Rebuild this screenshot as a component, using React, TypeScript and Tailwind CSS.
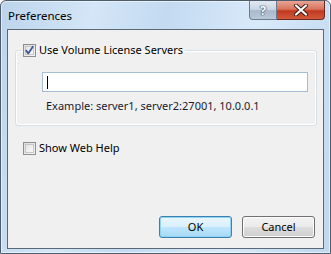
import type { ReactNode } from "react";

function CheckBox({ checked }: { checked?: boolean }) {
  return (
    <span className="relative flex h-[13px] w-[13px] shrink-0 items-center justify-center border border-[#8f8f8f] bg-[linear-gradient(135deg,#dcdcdc,#f7f7f7)]">
      <span className="h-[9px] w-[9px] border border-[#c6c6c6] bg-[linear-gradient(135deg,#e4e4e4,#fafafa)]" />
      {checked ? (
        <svg
          viewBox="0 0 11 11"
          className="absolute left-0 top-0 h-[11px] w-[11px]"
        >
          <path
            d="M2.2 5.6 L4.3 8.4 L8.8 1.8"
            fill="none"
            stroke="#3b5899"
            strokeWidth="1.8"
            strokeLinecap="round"
            strokeLinejoin="round"
          />
        </svg>
      ) : null}
    </span>
  );
}

function Button({ children, primary }: { children: ReactNode; primary?: boolean }) {
  return (
    <button
      type="button"
      className={
        primary
          ? "flex h-[22px] w-[73px] items-center justify-center rounded-[3px] border border-[#3c7fb1] bg-[linear-gradient(#eaf6fd_0%,#d9f0fc_50%,#bee6fd_51%,#a7d9f5_100%)] text-[11px] text-black shadow-[inset_0_0_0_1px_#8fd3f4]"
          : "flex h-[22px] w-[73px] items-center justify-center rounded-[3px] border border-[#707070] bg-[linear-gradient(#f2f2f2_0%,#ebebeb_50%,#dddddd_51%,#cfcfcf_100%)] text-[11px] text-black shadow-[inset_0_0_0_1px_#fcfcfc]"
      }
    >
      {children}
    </button>
  );
}

export default function App() {
  return (
    <div className="h-[254px] w-[331px] overflow-hidden bg-white font-['Noto_Sans',sans-serif]">
      <div className="flex h-[254px] w-[331px] flex-col rounded-t-[6px] border border-[#4e5d6d] bg-[linear-gradient(100deg,#bcd4ec_0%,#d4e6f7_25%,#c3daf1_45%,#d9eafa_70%,#c0d7ee_100%)] shadow-[inset_0_0_0_1px_rgba(255,255,255,0.55)]">
        <div className="flex h-[28px] items-start">
          <span className="pl-[7px] pt-[7px] text-[11.5px] leading-[16px] text-black">
            Preferences
          </span>
          <div className="ml-auto mr-[5px] flex h-[19px]">
            <div className="flex w-[28px] items-center justify-center rounded-bl-[4px] border border-t-0 border-[#6d7c8d] bg-[linear-gradient(#e1e9f2_0%,#cbd7e4_45%,#a9b9cc_55%,#b9c9da_100%)]">
              <span className="text-[13px] font-bold leading-none text-white [text-shadow:0_0_1px_#2d3c4c,0_0_1px_#2d3c4c,0_0_1px_#2d3c4c]">
                ?
              </span>
            </div>
            <div className="flex w-[48px] items-center justify-center rounded-br-[4px] border border-l-0 border-t-0 border-[#6b2a22] bg-[linear-gradient(#e8a493_0%,#d8755f_45%,#c4391f_55%,#d2583c_100%)]">
              <svg viewBox="0 0 16 12" className="h-[12px] w-[16px]">
                <path
                  d="M3 1.5 L13 10.5 M13 1.5 L3 10.5"
                  stroke="#3a1a14"
                  strokeWidth="4"
                  strokeLinecap="round"
                />
                <path
                  d="M3 1.5 L13 10.5 M13 1.5 L3 10.5"
                  stroke="#ffffff"
                  strokeWidth="2.2"
                  strokeLinecap="round"
                />
              </svg>
            </div>
          </div>
        </div>

        <div className="mx-[6px] flex h-[220px] flex-col border border-[#5a6877] bg-[#f0f0f0] px-[7px] pb-[10px] text-[11px] text-black">
          <fieldset className="mt-[13px] h-[83px] rounded-[3px] border border-[#d5dfe5] pl-[5px] pr-[8px] shadow-[inset_0_0_0_1px_#ffffff]">
            <legend className="flex h-[14px] items-center gap-[3px] px-[2px] leading-[14px]">
              <CheckBox checked />
              <span>Use Volume License Servers</span>
            </legend>
            <div className="ml-[21px] mt-[15px] flex h-[20px] w-[266px] items-center border border-[#a6bcd3] bg-white px-[4px]">
              <span className="h-[13px] w-px bg-black" />
            </div>
            <div className="ml-[21px] mt-[6px] pl-[4px] leading-[16px] text-[#1b1b2f]">
              Example: server1, server2:27001, 10.0.0.1
            </div>
          </fieldset>

          <div className="mt-[15px] flex h-[14px] items-center gap-[3px] pl-[8px]">
            <CheckBox />
            <span>Show Web Help</span>
          </div>

          <div className="mt-auto flex justify-end gap-[10px] pr-[1px]">
            <Button primary>OK</Button>
            <Button>Cancel</Button>
          </div>
        </div>
      </div>
    </div>
  );
}
